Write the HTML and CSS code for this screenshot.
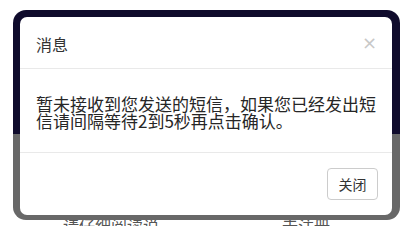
FILE: index.html
```html
<!DOCTYPE html>
<html lang="zh">
<head>
<meta charset="utf-8">
<link rel="stylesheet" href="styles.css">
</head>
<body>
<div class="device">
  <div class="modal">
    <div class="modal-header">
      <span class="title">消息</span>
      <span class="close">×</span>
    </div>
    <div class="modal-body">
      <p class="msg"><span class="line">暂未接收到您发送的短信，如果您已经发出短</span><span class="line">信请间隔等待2到5秒再点击确认。</span></p>
    </div>
    <div class="modal-footer">
      <button class="btn">关闭</button>
    </div>
  </div>
</div>
<div class="below">
  <span class="frag frag-left">请仔细阅读说</span>
  <span class="frag frag-right">去注册</span>
</div>
</body>
</html>
```

FILE: styles.css
```css
html, body {
  margin: 0;
  padding: 0;
  background: #ffffff;
  font-family: "Noto Sans CJK SC", sans-serif;
  overflow: hidden;
}

.device {
  margin: 10px 0 0 13px;
  width: 387px;
  height: 210px;
  box-sizing: border-box;
  padding: 7px 8px 5px 7px;
  border-radius: 13px;
  background: linear-gradient(to bottom, #0f0b2c 0, #0f0b2c 124px, #686868 124px, #686868 100%);
}

.modal {
  background: #ffffff;
  border-radius: 7px;
  height: 198px;
  display: flex;
  flex-direction: column;
  overflow: hidden;
}

.modal-header {
  height: 52px;
  box-sizing: border-box;
  border-bottom: 1px solid #e9e9e9;
  display: flex;
  align-items: center;
  justify-content: space-between;
  padding: 0 15px 0 16px;
}

.title {
  font-size: 16px;
  color: #333333;
  line-height: 1;
  margin-top: 2px;
}

.close {
  font-family: "DejaVu Sans", sans-serif;
  font-size: 18px;
  color: #c8c8c8;
  line-height: 1;
}

.modal-body {
  height: 84px;
  box-sizing: border-box;
  border-bottom: 1px solid #e9e9e9;
  padding: 0 16px;
  display: flex;
  align-items: center;
}

.msg {
  margin: 2px 0 0 0;
  display: flex;
  flex-direction: column;
  font-size: 17px;
  color: #262626;
}

.line {
  display: block;
  height: 17px;
  line-height: 17px;
  white-space: nowrap;
}

.modal-footer {
  flex: 1;
  display: flex;
  justify-content: flex-end;
  align-items: flex-start;
  padding: 15px 14px 0 0;
}

.btn {
  font-family: inherit;
  width: 51px;
  height: 32px;
  box-sizing: border-box;
  border: 1px solid #cccccc;
  border-radius: 4px;
  background: #ffffff;
  color: #333333;
  font-size: 14px;
  padding: 0;
}

.below {
  height: 6px;
  overflow: hidden;
  display: flex;
}

.frag {
  font-size: 16px;
  line-height: 16px;
  color: #555555;
  margin-top: -3px;
}

.frag-left {
  margin-left: 63px;
}

.frag-right {
  margin-left: 123px;
}
```
